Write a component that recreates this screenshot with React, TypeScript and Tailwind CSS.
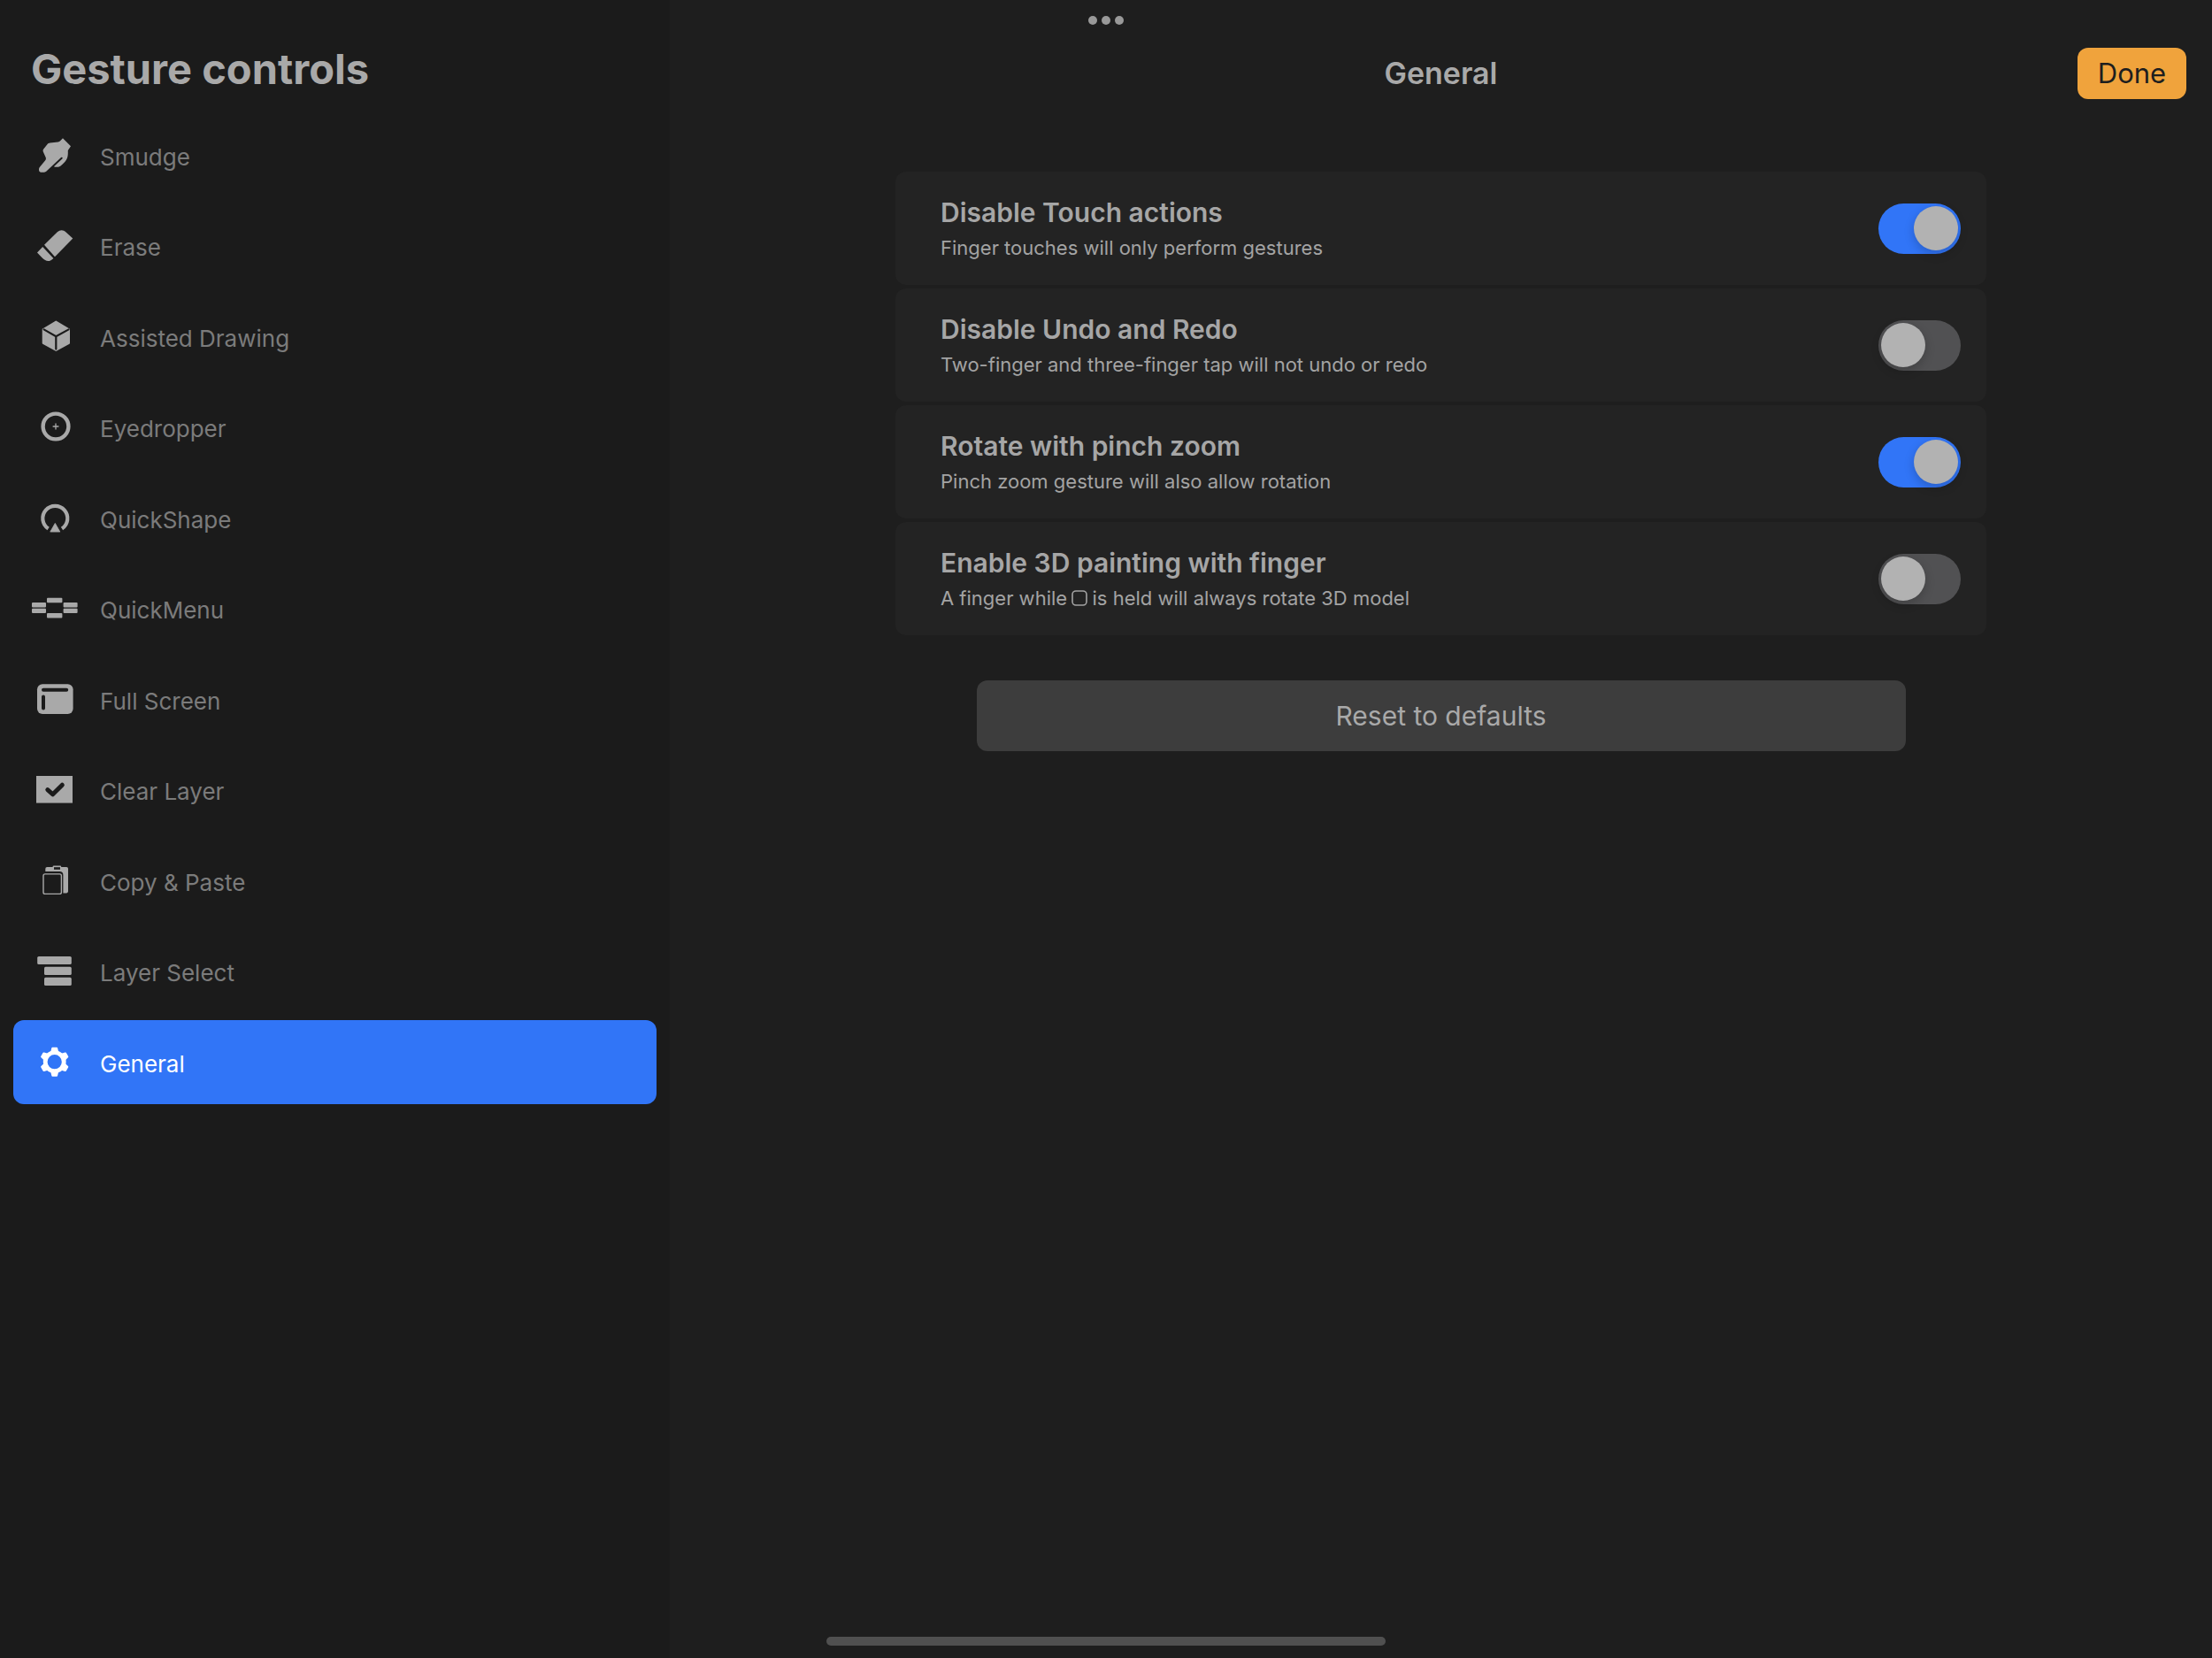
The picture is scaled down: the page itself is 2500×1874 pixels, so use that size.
import { useId, useState } from "react";
import type { ReactNode } from "react";
import clsx from "clsx";

type NavItem = {
  label: string;
  icon: ReactNode;
};

type Setting = {
  title: string;
  description: ReactNode;
  enabled: boolean;
};

/* Icons share one 56x48 box; cut-outs are stroked in the sidebar colour */
function Icon({ children }: { children: ReactNode }) {
  return (
    <svg
      viewBox="0 0 56 48"
      className="h-12 w-14 shrink-0"
      fill="currentColor"
      aria-hidden="true"
    >
      {children}
    </svg>
  );
}

const NAV_ITEMS: NavItem[] = [
  {
    label: "Smudge",
    icon: (
      <path d="M35 4.3 44 13.2 40.8 18C40.9 21 40.9 24 40 26.5 38.8 29.5 36.5 32 34 34.2 32 36 30.5 36.8 28.5 36.8H26.2C25 36.8 25 35.9 26 35.2L34.3 27.4C35.4 26.2 34.2 25 33 26L16.5 41.6C15.6 42.4 15 42.7 14 42.7H10C8.6 42.4 8 41.4 8 39.8 8 38.4 8.3 37.6 9.2 36.5L15 29.6C16 28.2 16.1 27.4 15.7 26L12.8 19.6C12.4 18.4 12.5 17.6 13.2 16.6L17.6 11C18.4 10 19.3 9.6 20.5 9.5L29.6 8.4C30.8 8.3 31.3 8 32 7.2Z" />
    ),
  },
  {
    label: "Erase",
    icon: (
      <>
        <path d="M46.3 15.5 38.6 8.4C35.5 5.5 31.8 5.5 28.8 8.3L14 22.8 26 36.2Z" />
        <path d="M12.2 25 6 31.5 12 37.8C15.8 41.8 20.5 42.2 24.4 37.9Z" />
      </>
    ),
  },
  {
    label: "Assisted Drawing",
    icon: (
      <>
        <path
          d="M27.3 6.6 42 15.4V30.8L27.3 39 12.7 30.8V15.4Z"
          stroke="currentColor"
          strokeWidth="2"
          strokeLinejoin="round"
        />
        <path
          d="M13.6 15.4 27.3 23.2 41.6 15.4M27.3 23.2V37.6"
          fill="none"
          stroke="#1b1b1b"
          strokeWidth="2.2"
          strokeLinecap="round"
        />
      </>
    ),
  },
  {
    label: "Eyedropper",
    icon: (
      <g fill="none" stroke="currentColor">
        <circle cx="27" cy="23" r="14.4" strokeWidth="4.4" />
        <path d="M23.6 23h6.8M27 19.6v6.8" strokeWidth="1.3" />
      </g>
    ),
  },
  {
    label: "QuickShape",
    icon: (
      <>
        <path
          d="M18.6 35.6A14 14 0 1 1 34 35.6"
          fill="none"
          stroke="currentColor"
          strokeWidth="4.2"
        />
        <path
          d="M26.3 29.4 31.8 39.1H20.8Z"
          stroke="currentColor"
          strokeWidth="0.8"
          strokeLinejoin="round"
        />
      </>
    ),
  },
  {
    label: "QuickMenu",
    icon: (
      <>
        <rect x="0" y="17" width="16" height="5.4" rx="1" />
        <rect x="0" y="23.7" width="16" height="5.4" rx="1" />
        <rect x="17" y="11.7" width="17.4" height="5.6" rx="1" />
        <rect x="17" y="29" width="17.4" height="5.6" rx="1" />
        <rect x="35.6" y="17" width="16" height="5.4" rx="1" />
        <rect x="35.6" y="23.7" width="16" height="5.4" rx="1" />
      </>
    ),
  },
  {
    label: "Full Screen",
    icon: (
      <>
        <rect x="6" y="6.3" width="40.6" height="33.8" rx="6" />
        <path
          d="M13 12.8H39.2M13 20.6V33.4"
          stroke="#1b1b1b"
          strokeWidth="4"
          strokeLinecap="round"
        />
      </>
    ),
  },
  {
    label: "Clear Layer",
    icon: (
      <>
        <rect x="5" y="8" width="41" height="30.6" />
        <path
          d="M17.8 23.6 23.7 28.8 34.3 18.2"
          fill="none"
          stroke="#1b1b1b"
          strokeWidth="5"
          strokeLinecap="round"
          strokeLinejoin="round"
        />
      </>
    ),
  },
  {
    label: "Copy & Paste",
    icon: (
      <>
        <path d="M15.3 13V10Q15.3 8 17.3 8H23.6V7.6Q23.6 6.4 24.8 6.4H32Q33.2 6.4 33.2 7.6V8H39.2Q41 8 41 9.8V35.6Q41 37.4 39.2 37.4H35.4V17Q35.4 13 31.4 13Z" />
        <rect x="25" y="8.2" width="7" height="2.6" fill="#1b1b1b" />
        <rect
          x="13"
          y="15.9"
          width="20.4"
          height="22.5"
          rx="2"
          fill="none"
          stroke="currentColor"
          strokeWidth="1.4"
        />
      </>
    ),
  },
  {
    label: "Layer Select",
    icon: (
      <>
        <rect x="6.2" y="6.9" width="38.6" height="9.2" rx="1.6" />
        <rect x="14" y="18.8" width="30.8" height="9.2" rx="1.6" />
        <rect x="14" y="30.8" width="30.8" height="9.2" rx="1.6" />
      </>
    ),
  },
  {
    label: "General",
    icon: (
      <g transform="translate(25.7 23.2)">
        <circle r="10.5" fill="none" stroke="currentColor" strokeWidth="4.8" />
        {[0, 60, 120, 180, 240, 300].map((angle) => (
          <path
            key={angle}
            d="M-4.6-10.6-3.4-15.6Q-3.2-16.5-2.4-16.5H2.4Q3.2-16.5 3.4-15.6L4.6-10.6Z"
            transform={`rotate(${angle})`}
          />
        ))}
      </g>
    ),
  },
];

const SETTINGS: Setting[] = [
  {
    title: "Disable Touch actions",
    description: "Finger touches will only perform gestures",
    enabled: true,
  },
  {
    title: "Disable Undo and Redo",
    description: "Two-finger and three-finger tap will not undo or redo",
    enabled: false,
  },
  {
    title: "Rotate with pinch zoom",
    description: "Pinch zoom gesture will also allow rotation",
    enabled: true,
  },
  {
    title: "Enable 3D painting with finger",
    description: (
      <>
        A finger while{" "}
        <svg
          viewBox="0 0 18 18"
          className="-mx-px inline-block size-[18px] align-[-1px]"
          aria-hidden="true"
        >
          <rect
            x="1"
            y="1"
            width="16"
            height="16"
            rx="4"
            fill="none"
            stroke="currentColor"
            strokeWidth="1.6"
          />
        </svg>{" "}
        is held will always rotate 3D model
      </>
    ),
    enabled: false,
  },
];

function SettingCard({ title, description, enabled }: Setting) {
  const id = useId();
  const [on, setOn] = useState(enabled);

  return (
    <li className="flex h-32 items-center justify-between rounded-xl bg-[#232323] pr-[29px] pl-[51px]">
      <div className="flex flex-col gap-1">
        <label htmlFor={id} className="text-[30px] leading-10 font-semibold text-[#a6a6a6]">
          {title}
        </label>
        <p id={`${id}-desc`} className="text-[22px] leading-8 text-[#a3a3a3]">
          {description}
        </p>
      </div>
      <input
        id={id}
        type="checkbox"
        role="switch"
        aria-describedby={`${id}-desc`}
        checked={on}
        onChange={(e) => setOn(e.target.checked)}
        className="flex h-[57px] w-[93px] shrink-0 cursor-pointer appearance-none items-center rounded-full bg-[#515153] px-[3px] before:size-[50px] before:rounded-full before:bg-[#b2b2b2] before:shadow-[0_4px_12px_rgba(0,0,0,0.2)] checked:justify-end checked:bg-[#3175f7]"
      />
    </li>
  );
}

export default function App() {
  const [active, setActive] = useState("General");

  return (
    <div className="relative flex min-h-screen bg-[#1e1e1e] font-['Inter','Liberation_Sans',sans-serif] text-[#a9a9a9]">
      {/* Sidebar */}
      <aside className="w-[757px] shrink-0 bg-[#1b1b1b] px-[15px] pt-12">
        <h1 className="pl-5 text-[47px] leading-[60px] font-bold">Gesture controls</h1>
        <nav className="mt-5">
          <ul className="flex h-[1120px] flex-col justify-between">
            {NAV_ITEMS.map(({ label, icon }) => (
              <li key={label}>
                <button
                  type="button"
                  onClick={() => setActive(label)}
                  aria-current={label === active ? "page" : undefined}
                  className={clsx(
                    "flex h-[95px] w-full items-center gap-[21px] rounded-xl pl-[21px] text-left",
                    label === active && "bg-[#3175f7] text-white",
                  )}
                >
                  <Icon>{icon}</Icon>
                  <span
                    className={clsx("pt-[3px] text-[26px]", label !== active && "text-[#7b7b7b]")}
                  >
                    {label}
                  </span>
                </button>
              </li>
            ))}
          </ul>
        </nav>
      </aside>

      {/* Detail pane */}
      <main className="flex min-w-0 flex-1 flex-col items-center px-[29px] pt-[54px]">
        <header className="grid w-full grid-cols-3 items-center">
          <h2 className="col-start-2 text-center text-[34px] leading-10 font-semibold">General</h2>
          <button
            type="button"
            className="h-[58px] w-[123px] justify-self-end rounded-xl bg-[#f0a33c] text-[31px] text-[#1e1e1e]"
          >
            Done
          </button>
        </header>

        <ul className="mt-[82px] flex w-full max-w-[1233px] flex-col gap-1">
          {SETTINGS.map((setting) => (
            <SettingCard key={setting.title} {...setting} />
          ))}
        </ul>

        <button
          type="button"
          className="mt-[51px] h-20 w-full max-w-[1050px] rounded-xl bg-[#3d3d3d] text-[30px]"
        >
          Reset to defaults
        </button>
      </main>

      {/* Multitasking dots */}
      <div className="absolute inset-x-0 top-[18px] flex justify-center gap-[5px]">
        <span className="size-[10px] rounded-full bg-[#999999]" />
        <span className="size-[10px] rounded-full bg-[#999999]" />
        <span className="size-[10px] rounded-full bg-[#999999]" />
      </div>

      {/* Home indicator */}
      <div className="absolute inset-x-0 bottom-[14px] flex justify-center">
        <span className="h-[10px] w-[632px] rounded-full bg-[#505050]" />
      </div>
    </div>
  );
}
